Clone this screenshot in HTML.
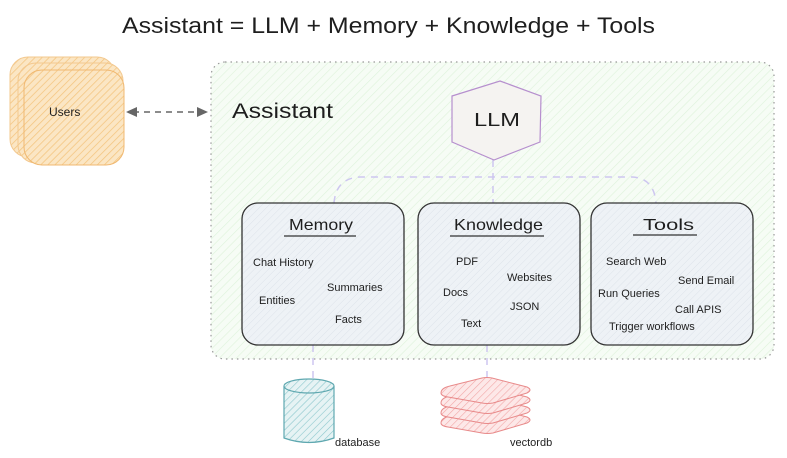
<!DOCTYPE html>
<html><head><meta charset="utf-8"><style>
html,body{margin:0;padding:0;background:#fff;width:787px;height:458px;overflow:hidden}
svg{display:block}
text{font-family:"Liberation Sans",sans-serif;fill:#1e1e1e}
</style></head><body>
<svg width="787" height="458" viewBox="0 0 787 458" xmlns="http://www.w3.org/2000/svg">
<defs>
<pattern id="hg" width="6" height="6" patternUnits="userSpaceOnUse" patternTransform="rotate(45)">
<rect width="6" height="6" fill="#f6fcf5"/><line x1="0" y1="0" x2="0" y2="6" stroke="#def2db" stroke-width="1.2"/></pattern>
<pattern id="ho" width="5" height="5" patternUnits="userSpaceOnUse" patternTransform="rotate(45)">
<rect width="5" height="5" fill="#fbe6c4"/><line x1="0" y1="0" x2="0" y2="5" stroke="#f3c47e" stroke-width="1.5"/></pattern>
<pattern id="hb" width="5" height="5" patternUnits="userSpaceOnUse" patternTransform="rotate(45)">
<rect width="5" height="5" fill="#eef2f6"/><line x1="0" y1="0" x2="0" y2="5" stroke="#dde3ea" stroke-width="1"/></pattern>
<pattern id="hc" width="5" height="5" patternUnits="userSpaceOnUse" patternTransform="rotate(45)">
<rect width="5" height="5" fill="#e6f3f4"/><line x1="0" y1="0" x2="0" y2="5" stroke="#8cc7cc" stroke-width="1.2"/></pattern>
<pattern id="hr" width="5" height="5" patternUnits="userSpaceOnUse" patternTransform="rotate(45)">
<rect width="5" height="5" fill="#fde8e8"/><line x1="0" y1="0" x2="0" y2="5" stroke="#f2a8a8" stroke-width="1.2"/></pattern>
</defs>

<text x="122" y="33" font-size="22" textLength="533" lengthAdjust="spacingAndGlyphs">Assistant = LLM + Memory + Knowledge + Tools</text>

<rect x="10" y="57" width="105" height="100" rx="18" fill="url(#ho)" stroke="#f3c88e" stroke-width="1"/>
<rect x="18" y="63" width="105" height="100" rx="18" fill="url(#ho)" stroke="#f3c88e" stroke-width="1"/>
<rect x="24" y="70" width="100" height="95" rx="18" fill="url(#ho)" stroke="#f0b870" stroke-width="1"/>
<text x="49" y="116" font-size="12">Users</text>

<line x1="133" y1="112" x2="200" y2="112" stroke="#666" stroke-width="1.5" stroke-dasharray="6 5"/>
<path d="M126 112 L137 107 L137 117Z" fill="#666"/>
<path d="M208 112 L197 107 L197 117Z" fill="#666"/>

<rect x="211" y="62" width="563" height="297" rx="14" fill="url(#hg)" stroke="#999" stroke-width="1.2" stroke-dasharray="1.5 4"/>
<text x="232" y="118" font-size="21" textLength="101" lengthAdjust="spacingAndGlyphs">Assistant</text>

<path d="M334 203 Q336 178 360 177 L632 177 Q654 178 656 203" fill="none" stroke="#cdc6f0" stroke-width="1.5" stroke-dasharray="7 6"/>
<line x1="493" y1="160" x2="493" y2="203" stroke="#cdc6f0" stroke-width="1.5" stroke-dasharray="7 6"/>
<line x1="313" y1="345" x2="313" y2="378" stroke="#cdc6f0" stroke-width="1.5" stroke-dasharray="7 6"/>
<line x1="487" y1="345" x2="487" y2="378" stroke="#cdc6f0" stroke-width="1.5" stroke-dasharray="7 6"/>

<path d="M500 81 L541 96 L540 142 L494 160 L452 142 L452 96Z" fill="#f5f3f1" stroke="#b68fce" stroke-width="1.2"/>
<text x="474" y="126" font-size="18" textLength="46" lengthAdjust="spacingAndGlyphs">LLM</text>

<rect x="242" y="203" width="162" height="142" rx="16" fill="url(#hb)" stroke="#333" stroke-width="1.3"/>
<rect x="418" y="203" width="162" height="142" rx="16" fill="url(#hb)" stroke="#333" stroke-width="1.3"/>
<rect x="591" y="203" width="162" height="142" rx="16" fill="url(#hb)" stroke="#333" stroke-width="1.3"/>

<text x="289" y="230" font-size="16" textLength="64" lengthAdjust="spacingAndGlyphs">Memory</text>
<line x1="284" y1="236" x2="356" y2="236" stroke="#333" stroke-width="1.3"/>
<text x="454" y="230" font-size="16" textLength="89" lengthAdjust="spacingAndGlyphs">Knowledge</text>
<line x1="450" y1="236" x2="544" y2="236" stroke="#333" stroke-width="1.3"/>
<text x="643" y="230" font-size="16" textLength="51" lengthAdjust="spacingAndGlyphs">Tools</text>
<line x1="633" y1="235" x2="697" y2="235" stroke="#333" stroke-width="1.3"/>

<g font-size="11">
<text x="253" y="266">Chat History</text>
<text x="327" y="291">Summaries</text>
<text x="259" y="304">Entities</text>
<text x="335" y="323">Facts</text>
<text x="456" y="265">PDF</text>
<text x="507" y="281">Websites</text>
<text x="443" y="296">Docs</text>
<text x="510" y="310">JSON</text>
<text x="461" y="327">Text</text>
<text x="606" y="265">Search Web</text>
<text x="678" y="284">Send Email</text>
<text x="598" y="297">Run Queries</text>
<text x="675" y="313">Call APIS</text>
<text x="609" y="330">Trigger workflows</text>
</g>

<path d="M284 386 L284 438 Q309 447 334 438 L334 386" fill="url(#hc)" stroke="#5fa8b0" stroke-width="1.2"/>
<ellipse cx="309" cy="386" rx="25" ry="7" fill="url(#hc)" stroke="#5fa8b0" stroke-width="1.2"/>
<text x="335" y="446" font-size="11">database</text>

<g fill="url(#hr)" stroke="#e88a8a" stroke-width="1">
<path d="M441 423 Q441 418 450 416 L482 408 Q487 407 492 408 L527 417 Q533 420 527 423 L493 433 Q487 434 482 433 L448 427 Q441 426 441 423Z"/>
<path d="M441 413 Q441 408 450 406 L482 398 Q487 397 492 398 L527 407 Q533 410 527 413 L493 423 Q487 424 482 423 L448 417 Q441 416 441 413Z"/>
<path d="M441 403 Q441 398 450 396 L482 388 Q487 387 492 388 L527 397 Q533 400 527 403 L493 413 Q487 414 482 413 L448 407 Q441 406 441 403Z"/>
<path d="M441 393 Q441 388 450 386 L482 378 Q487 377 492 378 L527 387 Q533 390 527 393 L493 403 Q487 404 482 403 L448 397 Q441 396 441 393Z"/>
</g>
<text x="510" y="446" font-size="11">vectordb</text>
</svg>
</body></html>
